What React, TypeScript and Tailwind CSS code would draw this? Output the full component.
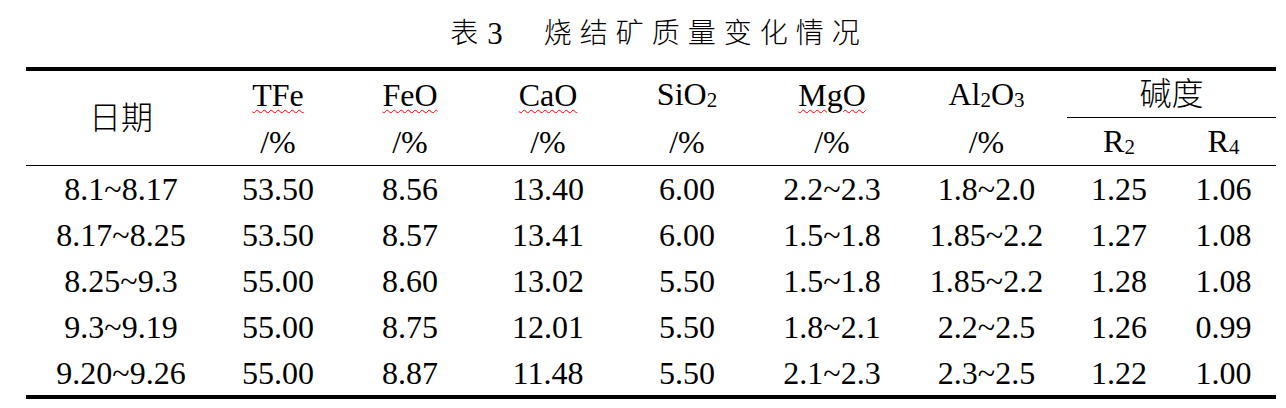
import React from 'react';

const cols =
  'grid grid-cols-[190px_124px_140px_136px_142px_148px_161px_104px_105px]';

const rows: string[][] = [
  ['8.1~8.17', '53.50', '8.56', '13.40', '6.00', '2.2~2.3', '1.8~2.0', '1.25', '1.06'],
  ['8.17~8.25', '53.50', '8.57', '13.41', '6.00', '1.5~1.8', '1.85~2.2', '1.27', '1.08'],
  ['8.25~9.3', '55.00', '8.60', '13.02', '5.50', '1.5~1.8', '1.85~2.2', '1.28', '1.08'],
  ['9.3~9.19', '55.00', '8.75', '12.01', '5.50', '1.8~2.1', '2.2~2.5', '1.26', '0.99'],
  ['9.20~9.26', '55.00', '8.87', '11.48', '5.50', '2.1~2.3', '2.3~2.5', '1.22', '1.00'],
];

const Sub: React.FC<{ children: React.ReactNode }> = ({ children }) => (
  <span className="text-[21px] align-[-2px]">{children}</span>
);

const Wavy: React.FC<{ children: React.ReactNode }> = ({ children }) => (
  <span className="underline decoration-wavy decoration-[#ff0000] decoration-1 underline-offset-[3px]">
    {children}
  </span>
);

const Cell: React.FC<{ children: React.ReactNode; className?: string }> = ({
  children,
  className = '',
}) => (
  <div className={`flex items-center justify-center whitespace-nowrap ${className}`}>
    {children}
  </div>
);

const App: React.FC = () => {
  return (
    <div className="w-[1286px] h-[408px] bg-white text-black font-light font-['Liberation_Serif','Noto_Sans_CJK_SC',serif]">
      <div className="h-[67px] flex items-center justify-center pl-[24px] text-[28px] leading-none">
        <span>表</span>
        <span className="ml-[9px] text-[31px]">3</span>
        <span className="ml-[41px] tracking-[8px] -mr-2">烧结矿质量变化情况</span>
      </div>

      <div className="mx-[26px] w-[1250px] border-t-4 border-b-4 border-black text-[32px] leading-none">
        <div className={`${cols} grid-rows-[47px_47px]`}>
          <Cell className="row-span-2">日期</Cell>
          <Cell>
            <Wavy>TFe</Wavy>
          </Cell>
          <Cell>
            <Wavy>FeO</Wavy>
          </Cell>
          <Cell>
            <Wavy>CaO</Wavy>
          </Cell>
          <Cell>
            <span>
              SiO<Sub>2</Sub>
            </span>
          </Cell>
          <Cell>
            <Wavy>MgO</Wavy>
          </Cell>
          <Cell>
            <span>
              Al<Sub>2</Sub>O<Sub>3</Sub>
            </span>
          </Cell>
          <Cell className="col-span-2 border-b border-black">碱度</Cell>
          <Cell>/%</Cell>
          <Cell>/%</Cell>
          <Cell>/%</Cell>
          <Cell>/%</Cell>
          <Cell>/%</Cell>
          <Cell>/%</Cell>
          <Cell>
            <span>
              R<Sub>2</Sub>
            </span>
          </Cell>
          <Cell>
            <span>
              R<Sub>4</Sub>
            </span>
          </Cell>
        </div>

        <div className="border-t border-black">
          {rows.map((row, i) => (
            <div
              key={row[0]}
              className={`${cols} ${i === rows.length - 1 ? 'h-[45px]' : 'h-[46px]'}`}
            >
              {row.map((v, j) => (
                <Cell key={j}>{v}</Cell>
              ))}
            </div>
          ))}
        </div>
      </div>
    </div>
  );
};

export default App;
